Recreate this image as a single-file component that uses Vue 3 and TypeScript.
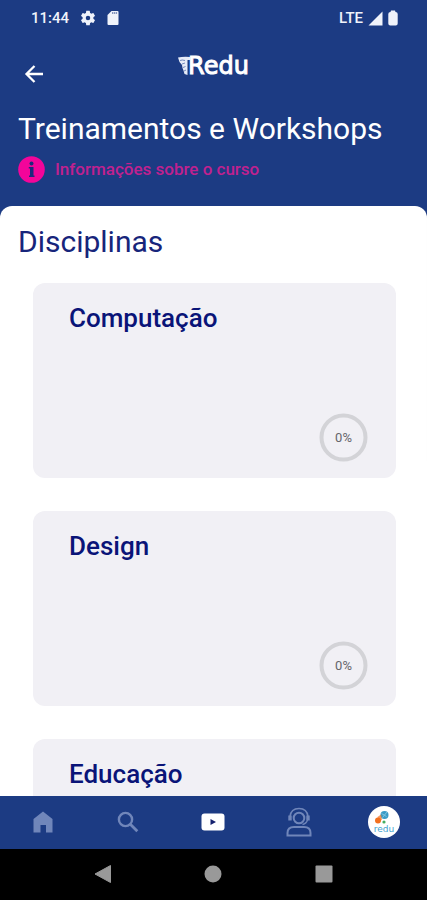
<script setup lang="ts">
interface Course {
  id: number
  name: string
  progress: number
}

const courses: Course[] = [
  { id: 1, name: 'Computação', progress: 0 },
  { id: 2, name: 'Design', progress: 0 },
  { id: 3, name: 'Educação', progress: 0 },
]

const ringLength = 2 * Math.PI * 22
</script>

<template>
  <div class="screen">
    <header class="top">
      <div class="status">
        <div class="status-side">
          <span>11:44</span>
          <svg width="18" height="18" viewBox="0 0 24 24" fill="currentColor" aria-hidden="true">
            <path fill-rule="evenodd" d="M19.14 12.94c.04-.3.06-.61.06-.94 0-.32-.02-.64-.07-.94l2.03-1.58a.49.49 0 0 0 .12-.61l-1.92-3.32a.49.49 0 0 0-.59-.22l-2.39.96c-.5-.38-1.03-.7-1.62-.94l-.36-2.54a.48.48 0 0 0-.48-.41h-3.84c-.24 0-.43.17-.47.41l-.36 2.54c-.59.24-1.13.57-1.62.94l-2.39-.96a.48.48 0 0 0-.59.22L2.74 8.87c-.12.21-.08.47.12.61l2.03 1.58c-.05.3-.09.63-.09.94s.02.64.07.94l-2.03 1.58a.49.49 0 0 0-.12.61l1.92 3.32c.12.22.37.29.59.22l2.39-.96c.5.38 1.03.7 1.62.94l.36 2.54c.05.24.24.41.48.41h3.84c.24 0 .44-.17.47-.41l.36-2.54c.59-.24 1.13-.56 1.62-.94l2.39.96c.22.08.47 0 .59-.22l1.92-3.32a.49.49 0 0 0-.12-.61zM12 15A3 3 0 1 1 12 9a3 3 0 0 1 0 6z" />
          </svg>
          <svg width="12" height="16" viewBox="0 0 12 16" aria-hidden="true">
            <path d="M4.500 1H10.500Q11.500 1 11.500 2V14Q11.500 15 10.500 15H1.500Q.500 15 .500 14V5z" fill="currentColor" />
            <path d="M5 3h5.500" stroke="#1c3b83" stroke-width="1.200" stroke-dasharray="1.300 .600" />
          </svg>
        </div>
        <div class="status-side right">
          <span>LTE</span>
          <svg width="15" height="15" viewBox="0 0 15 15" fill="currentColor" aria-hidden="true"><path d="M14.500 .500v14H.500z" /></svg>
          <svg class="battery" width="10" height="16" viewBox="0 0 10 16" fill="currentColor" aria-hidden="true"><path d="M3 .500h4L7.500 2Q9.700 2 9.700 4v9.500q0 2-2 2H2.300q-2 0-2-2V4q0-2 2.200-2z" /></svg>
        </div>
      </div>

      <div class="bar">
        <button class="back" type="button" aria-label="Voltar">
          <svg width="20" height="20" viewBox="0 0 20 20" fill="none" stroke="currentColor" stroke-width="2.300" aria-hidden="true"><path d="M19 10H2.500M10.500 2L2.500 10l8 8" /></svg>
        </button>
        <div class="brand">
          <svg width="12" height="20" viewBox="0 0 12 20" aria-hidden="true">
            <path d="M0 1.500Q5 .500 12 1V4H9.500V19L6.500 18 5.500 14.500 4.500 12 4 9 1.500 6z" fill="#e6ebf7" />
            <path d="M2 4.500Q4 3.500 7 4.500M4 8l3-1M5 11.500L7.500 10.500M6 15l2-1" fill="none" stroke="#5871ac" stroke-width=".8" />
          </svg>
          <span>Redu</span>
        </div>
      </div>

      <h1>Treinamentos e Workshops</h1>
      <a class="info" href="#info">
        <svg width="27" height="27" viewBox="0 0 27 27" aria-hidden="true">
          <circle cx="13.500" cy="13.500" r="13.300" fill="#f3059a" />
          <circle cx="13.500" cy="7.500" r="2" fill="#1c2a7c" />
          <path d="M10.800 11h4.700v8.500h1V21h-5.500v-1.500h1v-7h-1.200z" fill="#1c2a7c" />
        </svg>
        <span>Informações sobre o curso</span>
      </a>
    </header>

    <main class="sheet">
      <h2>Disciplinas</h2>
      <ul class="list">
        <li v-for="course in courses" :key="course.id" class="card">
          <h3>{{ course.name }}</h3>
          <div class="ring" role="img" :aria-label="`${course.progress}%`">
            <svg width="49" height="49" viewBox="0 0 49 49" aria-hidden="true">
              <circle cx="24.500" cy="24.500" r="22" fill="none" stroke="#d3d3d7" stroke-width="4" />
              <circle
                v-if="course.progress > 0"
                cx="24.500" cy="24.500" r="22" fill="none" stroke="#0a1478" stroke-width="4"
                :stroke-dasharray="`${(ringLength * course.progress) / 100} ${ringLength}`"
              />
            </svg>
            <span>{{ course.progress }}%</span>
          </div>
        </li>
      </ul>
    </main>

    <nav class="tabs" aria-label="Principal">
      <a href="#home" aria-label="Início">
        <svg width="20" height="22" viewBox="0 0 20 22" fill="currentColor" aria-hidden="true"><path d="M10 .500L19.500 8V21.500H13V14H7.500V21.500H.500V8z" /></svg>
      </a>
      <a href="#search" aria-label="Buscar">
        <svg width="22" height="22" viewBox="0 0 22 22" fill="none" stroke="currentColor" aria-hidden="true">
          <circle cx="8.500" cy="8.500" r="6.600" stroke-width="2.400" /><path d="M13.300 13.300l7 7" stroke-width="2.800" />
        </svg>
      </a>
      <a href="#videos" aria-label="Vídeos">
        <svg width="24" height="18" viewBox="0 0 24 18" aria-hidden="true">
          <rect x=".500" y=".500" width="23" height="17" rx="3" fill="#fff" /><path d="M9.500 6L15 9l-5.500 3z" fill="#14206e" />
        </svg>
      </a>
      <a href="#support" aria-label="Suporte">
        <svg width="26" height="30" viewBox="0 0 26 30" fill="none" stroke="currentColor" stroke-width="2" aria-hidden="true">
          <circle cx="13" cy="11" r="5.300" />
          <path d="M4 9.500Q5 1.500 13 1.500T22 9.500" stroke-width="1.600" />
          <path d="M4 8.500v5M22 8.500v5" stroke-width="3.400" />
          <path d="M21.500 13q-1 3.500-5 4.500" stroke-width="1.300" />
          <path d="M1.500 28.500V26Q1.500 20 8 20H18Q24.500 20 24.500 26V28.500z" />
        </svg>
      </a>
      <a href="#profile" aria-label="Perfil">
        <svg width="34" height="34" viewBox="0 0 34 34" aria-hidden="true">
          <circle cx="17" cy="17" r="16" fill="#fff" />
          <circle cx="17.500" cy="10" r="4" fill="#399bc7" />
          <path d="M14.500 8.500l5 3M20 7l-4.500 5.500" stroke="#81c5df" stroke-width="1" />
          <circle cx="11" cy="15.500" r="3" fill="#f37120" />
          <path d="M10.500 12l3.500-2.500 1 5-3 3z" fill="#f37120" opacity=".7" />
          <circle cx="17" cy="17" r="1.600" fill="#45ad62" />
          <text x="17" y="27" text-anchor="middle" class="avatar-text">redu</text>
        </svg>
      </a>
    </nav>

    <div class="system">
      <button type="button" aria-label="Sistema: voltar">
        <svg width="18" height="20" viewBox="0 0 18 20" fill="currentColor" aria-hidden="true"><path d="M16.500 1.500v17L1 10z" stroke="currentColor" stroke-linejoin="round" /></svg>
      </button>
      <button type="button" aria-label="Sistema: início">
        <svg width="18" height="18" viewBox="0 0 18 18" fill="currentColor" aria-hidden="true"><circle cx="9" cy="9" r="8.500" /></svg>
      </button>
      <button type="button" aria-label="Sistema: recentes">
        <svg width="18" height="18" viewBox="0 0 18 18" fill="currentColor" aria-hidden="true"><rect x=".500" y=".500" width="17" height="17" rx="1" /></svg>
      </button>
    </div>
  </div>
</template>

<style>
body {
  margin: 0;
}
</style>

<style scoped>
.screen {
  display: flex;
  flex-direction: column;
  height: 100vh;
  overflow: hidden;
  background: #1c3b83;
  font-family: Roboto, "Liberation Sans", sans-serif;
}
svg {
  display: block;
  flex: none;
}
h1,
h2,
h3,
ul {
  margin: 0;
  padding: 0;
}
button {
  display: grid;
  place-items: center;
  padding: 0;
  border: 0;
  background: none;
  color: inherit;
}
.top {
  flex: none;
  color: #fff;
  padding-bottom: 23px;
}
.status {
  display: flex;
  justify-content: space-between;
  align-items: center;
  height: 36px;
  padding: 0 29px 0 31px;
  color: #f0f3fb;
  font-size: 15px;
  font-weight: 500;
}
.status-side {
  display: flex;
  align-items: center;
  gap: 10px;
}
.status-side.right {
  gap: 5px;
}
.bar {
  display: grid;
  grid-template-columns: 1fr auto 1fr;
  height: 72px;
  align-items: start;
}
.back {
  width: 40px;
  height: 40px;
  margin: 18px 0 0 14px;
}
.brand {
  display: flex;
  align-items: center;
  margin-top: 16px;
  font: 24px/28px "DejaVu Sans", sans-serif;
  -webkit-text-stroke: 1px #fff;
}
.brand span {
  margin-left: -2px;
}
h1 {
  padding: 0 18px;
  font-size: 30px;
  line-height: 42px;
  font-weight: 400;
}
.info {
  display: flex;
  align-items: center;
  gap: 10px;
  margin: 6px 18px 0;
  color: #c0218f;
  font-size: 17px;
  line-height: 27px;
  font-weight: 500;
  text-decoration: none;
}
.sheet {
  flex: 1;
  min-height: 0;
  overflow-y: auto;
  scrollbar-width: none;
  padding: 16px 18px 0;
  border-radius: 12px 12px 0 0;
  background: #fff;
}
h2 {
  color: #17257b;
  font-size: 30px;
  line-height: 40px;
  font-weight: 400;
}
.list {
  display: grid;
  gap: 33px;
  margin: 21px 13px 0 15px;
  padding-bottom: 33px;
  list-style: none;
}
.card {
  display: flex;
  flex-direction: column;
  justify-content: space-between;
  box-sizing: border-box;
  min-height: 195px;
  padding: 19px 28px 16px 36px;
  border-radius: 12px;
  background: #f1f0f5;
}
h3 {
  color: #0a1478;
  font-size: 26px;
  line-height: 32px;
  font-weight: 500;
}
.ring {
  display: grid;
  place-items: center;
  align-self: end;
  color: #65656b;
  font-size: 13px;
}
.ring > * {
  grid-area: 1 / 1;
}
.tabs {
  flex: none;
  display: grid;
  grid-template-columns: repeat(5, 1fr);
  box-sizing: border-box;
  height: 53px;
  padding-bottom: 2px;
  background: #1c3b83;
  color: #7086ba;
}
.tabs a {
  display: grid;
  place-items: center;
  color: inherit;
}
.avatar-text {
  fill: #3fa3d0;
  font: 9px "DejaVu Sans", sans-serif;
}
.system {
  flex: none;
  display: grid;
  grid-template-columns: repeat(3, 1fr);
  box-sizing: border-box;
  height: 51px;
  padding: 0 48px 2px;
  background: #000;
  color: #999;
}
</style>
